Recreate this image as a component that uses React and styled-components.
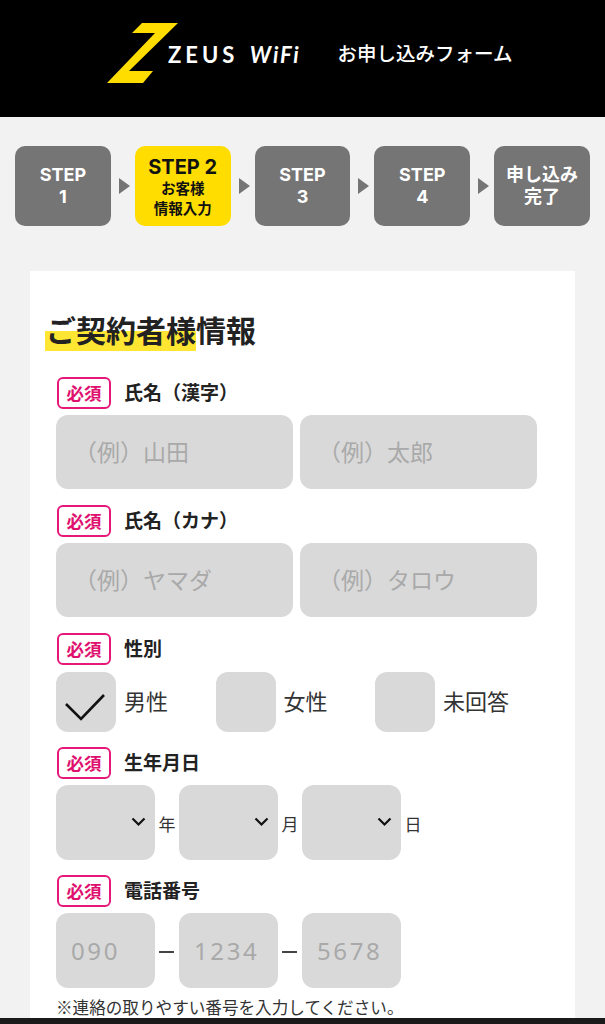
import React from "react";
import styled, { createGlobalStyle } from "styled-components";

const GlobalStyle = createGlobalStyle`
  html, body {
    margin: 0;
    height: 100%;
    overflow: hidden;
    background: #f2f2f2;
    font-family: "Noto Sans CJK JP", "Noto Sans", sans-serif;
    color: #222;
  }
  * { box-sizing: border-box; }
`;

const Header = styled.header`
  height: 117px;
  background: #000;
  display: flex;
  align-items: flex-start;
  padding: 23px 0 0 107px;
`;

const LogoMark = styled.svg`
  width: 71px;
  height: 60px;
  display: block;
  flex: none;
`;

const LogoText = styled.span`
  font-family: "Lato", sans-serif;
  font-weight: 700;
  font-size: 22px;
  line-height: 26px;
  letter-spacing: 4px;
  color: #fff;
  margin: 19px 0 0 -10px;
  white-space: nowrap;
`;

const LogoWifi = styled.i`
  font-style: italic;
  letter-spacing: 1.8px;
  margin-left: 5px;
`;

const HeaderTitle = styled.h1`
  margin: 17px 0 0 37px;
  font-size: 19.5px;
  line-height: 26px;
  font-weight: 500;
  color: #fff;
  white-space: nowrap;
`;

const Steps = styled.ol`
  list-style: none;
  margin: 29px 0 0;
  padding: 0 15px;
  display: flex;
  align-items: center;
`;

const Step = styled.li`
  flex: 1;
  height: 80px;
  border-radius: 10px;
  background: ${(p) => (p.$active ? "#ffdd00" : "#757575")};
  color: ${(p) => (p.$active ? "#111" : "#fff")};
  display: flex;
  flex-direction: column;
  align-items: center;
  justify-content: center;
  padding-top: ${(p) => (p.$active ? 2 : 0)}px;
  font-family: "Inter", "Noto Sans CJK JP", sans-serif;
  font-size: 18px;
  line-height: 22px;
  font-weight: 700;
  text-align: center;
`;

const StepTitle = styled.span`
  font-size: 20px;
  line-height: 24px;
`;

const StepSub = styled.span`
  font-size: 14.5px;
  line-height: 20px;
`;

const Arrow = styled.span`
  flex: none;
  width: 24px;
  display: flex;
  justify-content: center;
  padding-left: 3px;
  &::before {
    content: "";
    border-left: 11px solid #757575;
    border-top: 8px solid transparent;
    border-bottom: 8px solid transparent;
  }
`;

const Card = styled.main`
  margin: 45px 30px 0;
  background: #fff;
  padding: 40px 38px 0 26px;
`;

const Heading = styled.h2`
  margin: 0 0 26px -11px;
  font-size: 30px;
  line-height: 36px;
  font-weight: 700;
  color: #222;
`;

const Marked = styled.span`
  display: inline-block;
  padding: 0 0 4px 1px;
  background: linear-gradient(transparent 50%, #ffe633 50%);
`;

const Field = styled.section`
  margin-bottom: ${(p) => p.$gap || 16}px;
`;

const LabelRow = styled.div`
  display: flex;
  align-items: center;
  gap: 13px;
  height: 32px;
  margin: 0 0 ${(p) => p.$gap || 6}px 1px;
`;

const Required = styled.span`
  width: 54px;
  height: 32px;
  border: 2px solid #e6187a;
  border-radius: 6px;
  color: #e0106f;
  font-size: 17.5px;
  font-weight: 700;
  padding-bottom: 2px;
  display: flex;
  align-items: center;
  justify-content: center;
`;

const LabelText = styled.span`
  font-size: 19px;
  font-weight: 700;
  color: #222;
  padding-bottom: 3px;
`;

const Controls = styled.div`
  display: flex;
  align-items: center;
  gap: ${(p) => p.$gap || 0}px;
`;

const TextInput = styled.input`
  flex: 1;
  min-width: 0;
  height: 74px;
  border: 0;
  border-radius: 12px;
  background: #d9d9d9;
  padding: 0 0 2px 18px;
  font: 400 23px "Noto Sans CJK JP", sans-serif;
  &::placeholder {
    color: #a9a9a9;
    opacity: 1;
  }
`;

const NumberInput = styled(TextInput)`
  flex: none;
  width: 99px;
  height: 75px;
  padding: 0 0 0 15px;
  font-family: "Noto Sans", sans-serif;
  font-size: 24px;
  letter-spacing: 2.6px;
`;

const Choice = styled.label`
  width: 159.5px;
  display: flex;
  align-items: center;
  gap: 8px;
  font-size: 22px;
  color: #333;
`;

const ChoiceBox = styled.span`
  width: 60px;
  height: 60px;
  border-radius: 12px;
  background: #d9d9d9;
  flex: none;
  display: block;
`;

const ChoiceText = styled.span`
  padding-bottom: 4px;
`;

const CheckMark = styled.svg`
  width: 60px;
  height: 60px;
  display: block;
`;

const SelectWrap = styled.div`
  position: relative;
  width: 99px;
  height: 75px;
  flex: none;
`;

const Select = styled.select`
  appearance: none;
  display: block;
  width: 100%;
  height: 100%;
  border: 0;
  border-radius: 12px;
  background: #d9d9d9;
`;

const Chevron = styled.svg`
  position: absolute;
  right: 9px;
  top: 32px;
  width: 15px;
  height: 10px;
  pointer-events: none;
`;

const Unit = styled.span`
  flex: none;
  width: 24px;
  text-align: center;
  font-size: 17px;
  color: #333;
  padding-top: 2px;
`;

const Dash = styled.span`
  flex: none;
  width: 24px;
  display: flex;
  justify-content: center;
  padding: 3px 1px 0 0;
  &::before {
    content: "";
    width: 15px;
    height: 2px;
    background: #444;
  }
`;

const Note = styled.p`
  margin: 8px 0 0;
  font-size: 16.6px;
  line-height: 22px;
  color: #333;
  white-space: nowrap;
`;

const BottomBar = styled.div`
  position: fixed;
  left: 0;
  right: 0;
  bottom: 0;
  height: 6px;
  background: #1a1a1a;
`;

const RequiredLabel = ({ children, gap }) => (
  <LabelRow $gap={gap}>
    <Required>必須</Required>
    <LabelText>{children}</LabelText>
  </LabelRow>
);

const DateSelect = () => (
  <SelectWrap>
    <Select aria-label="select" />
    <Chevron viewBox="0 0 15 10">
      <path d="M1.5 1.5 L7.5 7.5 L13.5 1.5" fill="none" stroke="#111" strokeWidth="2.2" />
    </Chevron>
  </SelectWrap>
);

const App = () => {
  return (
    <>
      <GlobalStyle />
      <Header>
        <LogoMark viewBox="0 0 71 60">
          <polygon points="35,0 71,0 22,48 46,48 36,60 0,60 48,10 25,10" fill="#ffdd00" />
        </LogoMark>
        <LogoText>
          ZEUS<LogoWifi> WiFi</LogoWifi>
        </LogoText>
        <HeaderTitle>お申し込みフォーム</HeaderTitle>
      </Header>

      <Steps>
        <Step>STEP<br />1</Step>
        <Arrow />
        <Step $active>
          <StepTitle>STEP 2</StepTitle>
          <StepSub>お客様<br />情報入力</StepSub>
        </Step>
        <Arrow />
        <Step>STEP<br />3</Step>
        <Arrow />
        <Step>STEP<br />4</Step>
        <Arrow />
        <Step>申し込み<br />完了</Step>
      </Steps>

      <Card>
        <Heading><Marked>ご契約者様</Marked>情報</Heading>

        <Field>
          <RequiredLabel>氏名（漢字）</RequiredLabel>
          <Controls $gap={7}>
            <TextInput placeholder="（例）山田" />
            <TextInput placeholder="（例）太郎" />
          </Controls>
        </Field>

        <Field>
          <RequiredLabel>氏名（カナ）</RequiredLabel>
          <Controls $gap={7}>
            <TextInput placeholder="（例）ヤマダ" />
            <TextInput placeholder="（例）タロウ" />
          </Controls>
        </Field>

        <Field $gap={15}>
          <RequiredLabel gap={7}>性別</RequiredLabel>
          <Controls>
            <Choice>
              <ChoiceBox>
                <CheckMark viewBox="0 0 60 60">
                  <path d="M10 32 L25 47 L48 23" fill="none" stroke="#111" strokeWidth="2.6" />
                </CheckMark>
              </ChoiceBox>
              <ChoiceText>男性</ChoiceText>
            </Choice>
            <Choice><ChoiceBox /><ChoiceText>女性</ChoiceText></Choice>
            <Choice><ChoiceBox /><ChoiceText>未回答</ChoiceText></Choice>
          </Controls>
        </Field>

        <Field $gap={15}>
          <RequiredLabel>生年月日</RequiredLabel>
          <Controls>
            <DateSelect />
            <Unit>年</Unit>
            <DateSelect />
            <Unit>月</Unit>
            <DateSelect />
            <Unit>日</Unit>
          </Controls>
        </Field>

        <Field>
          <RequiredLabel>電話番号</RequiredLabel>
          <Controls>
            <NumberInput placeholder="090" />
            <Dash />
            <NumberInput placeholder="1234" />
            <Dash />
            <NumberInput placeholder="5678" />
          </Controls>
          <Note>※連絡の取りやすい番号を入力してください。</Note>
        </Field>
      </Card>
      <BottomBar />
    </>
  );
};

export default App;
